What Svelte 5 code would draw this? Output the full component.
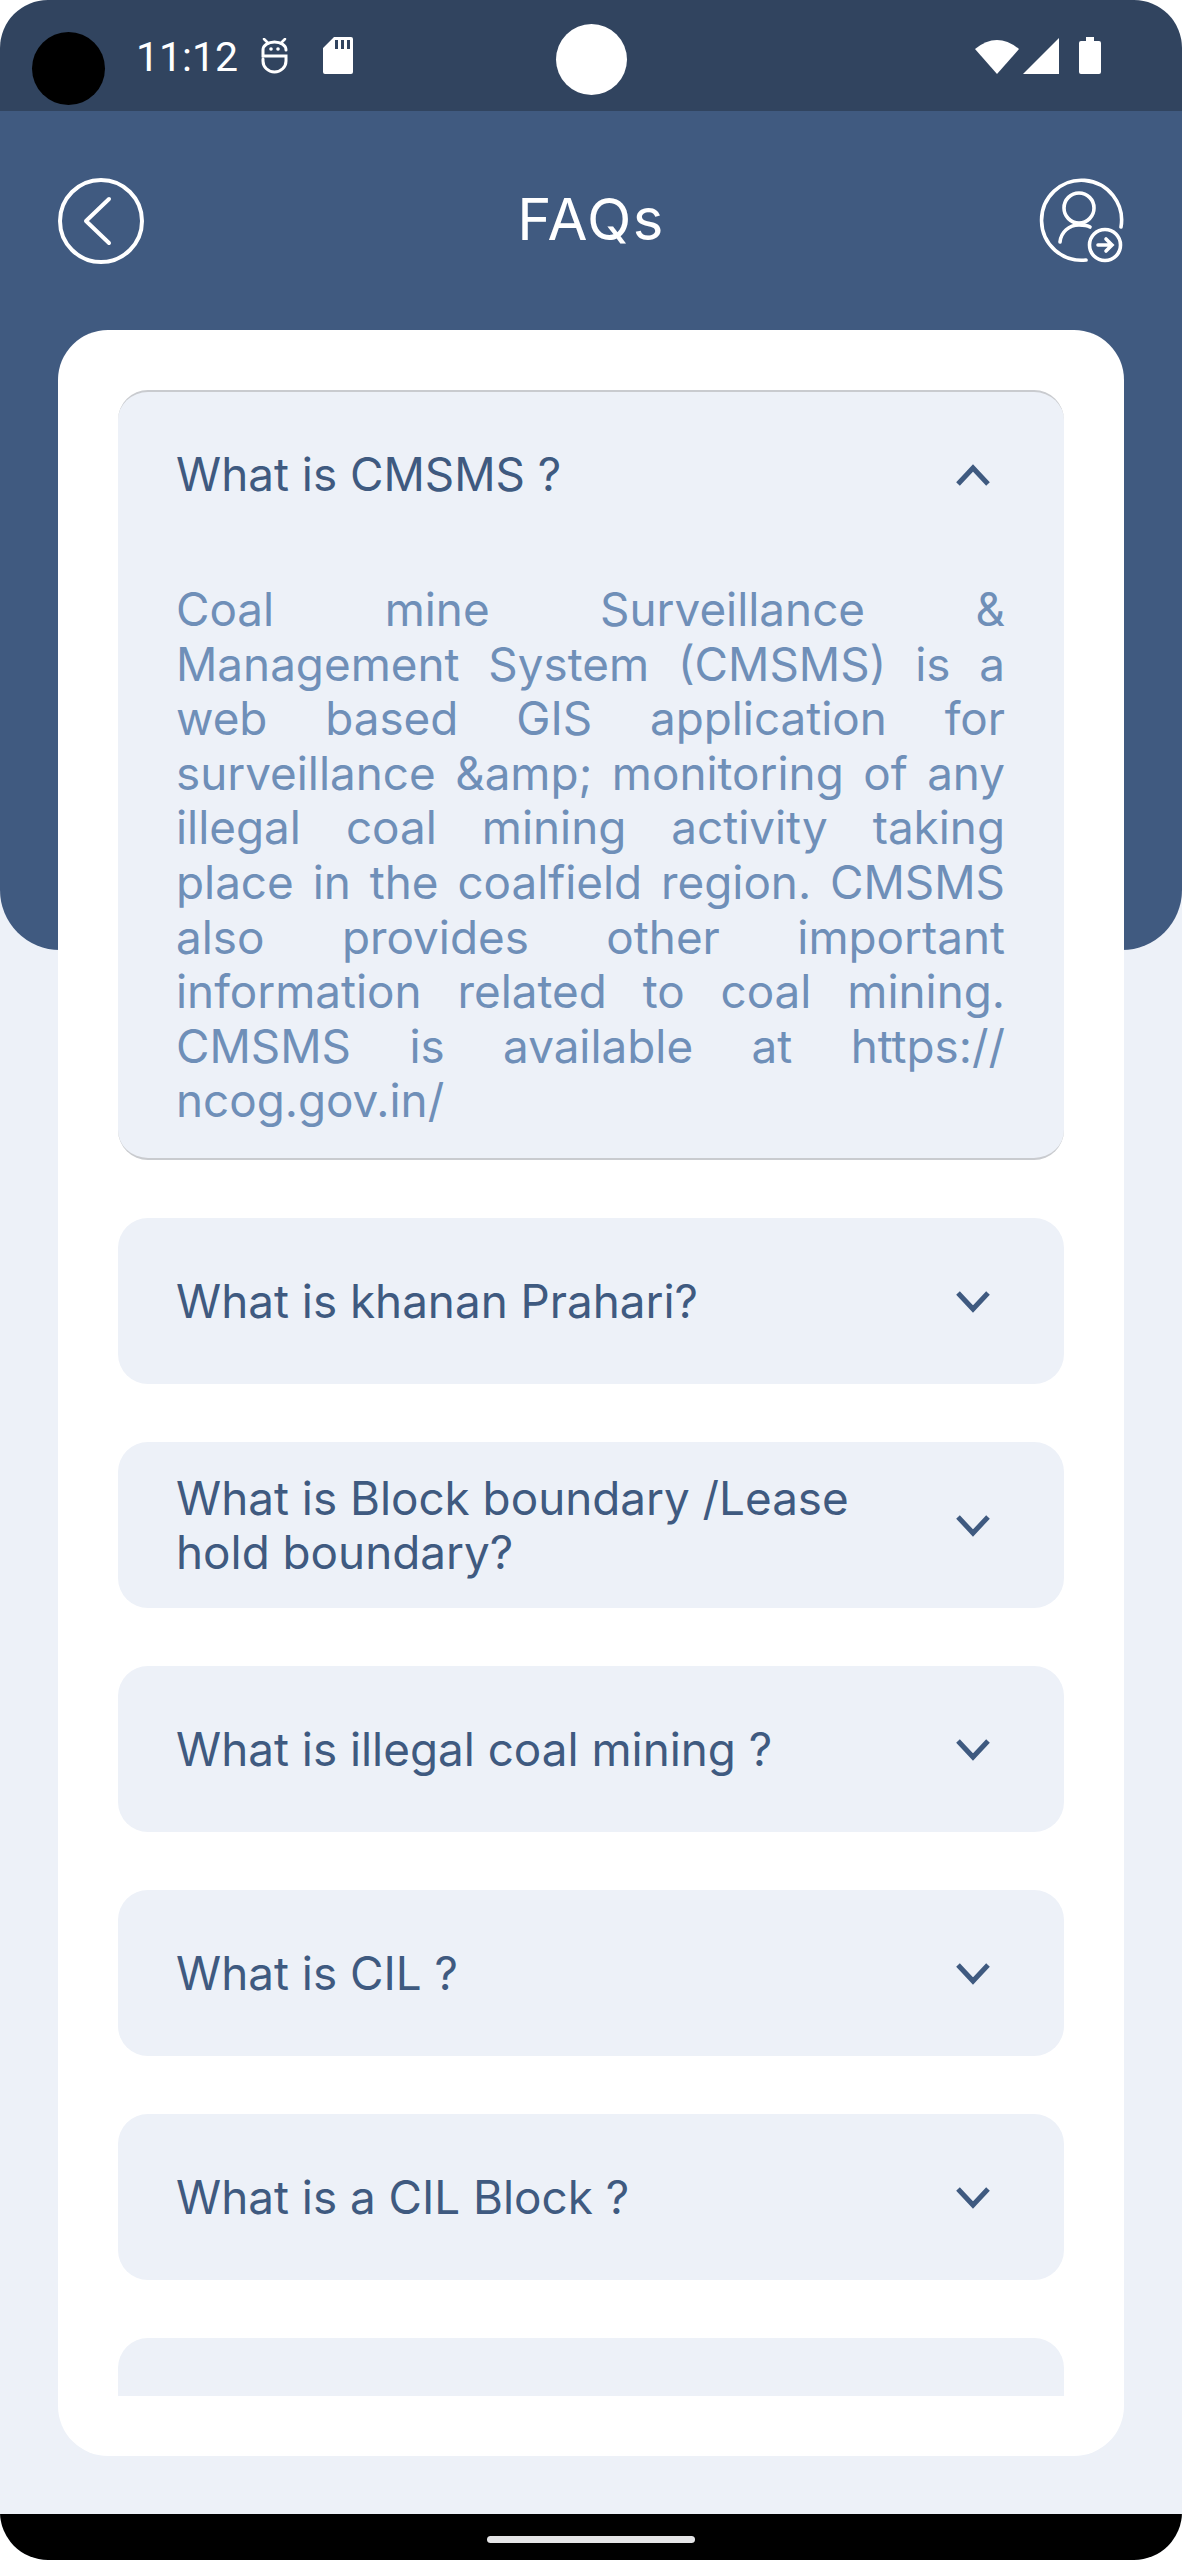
<script>
  const faqs = [
    'What is khanan Prahari?',
    'What is Block boundary /Lease hold boundary?',
    'What is illegal coal mining ?',
    'What is CIL ?',
    'What is a CIL Block ?',
    ''
  ];
</script>

<div class="screen">
  <div class="status">
    <span class="camera"></span>
    <span class="time">11:12</span>
    <svg class="debug" viewBox="0 0 27 36" fill="none" stroke="#fff" stroke-width="3" stroke-linecap="round">
      <path d="M25 12A11.5 8 0 0 0 2 12V18H25V23A11.5 11 0 0 1 2 23V21" />
      <path d="M3 1L7 5M24 1L20 5" stroke-width="2.5" />
      <circle cx="10" cy="11" r="1.8" fill="#fff" stroke="none" />
      <circle cx="17" cy="11" r="1.8" fill="#fff" stroke="none" />
    </svg>
    <svg class="sd" viewBox="0 0 30 37">
      <path fill="#fff" fill-rule="evenodd" d="M11 0h17a2 2 0 0 1 2 2v33a2 2 0 0 1-2 2H2a2 2 0 0 1-2-2V11zM12 3v9h3V3zM18 3v9h3V3zM24 3v9h3V3z" />
    </svg>
    <span class="dot"></span>
    <div class="sys">
      <svg class="wifi" viewBox="0 0 44 36"><path fill="#fff" d="M0 11Q22-7 44 11L22 36z" /></svg>
      <svg class="signal" viewBox="0 0 36 36"><path fill="#fff" d="M36 0v36H0z" /></svg>
      <svg class="battery" viewBox="0 0 22 37"><path fill="#fff" d="M7 0h8v4h5a2 2 0 0 1 2 2v29a2 2 0 0 1-2 2H2a2 2 0 0 1-2-2V6a2 2 0 0 1 2-2h5z" /></svg>
    </div>
  </div>

  <header class="head">
    <svg class="back" viewBox="0 0 86 86" fill="none" stroke="#fff" stroke-width="4" stroke-linecap="round" stroke-linejoin="round">
      <circle cx="43" cy="43" r="41" />
      <path d="M51 21L28 43L51 65" />
    </svg>
    <h1>FAQs</h1>
    <svg class="user" viewBox="0 0 86 86" fill="none" stroke="#fff" stroke-width="3.6" stroke-linecap="round">
      <path d="M83 49A40 40 0 1 0 48 82" />
      <circle cx="41" cy="30" r="15" />
      <path d="M22 64C23 54 31 47 41 47C45 47 49 47 52 49" />
      <circle cx="67" cy="67" r="15.5" />
      <path d="M60 67H73M68 61L74 67L68 73" stroke-width="3.6" />
    </svg>
  </header>

  <main class="card">
    <div class="list">
      <section class="item open">
        <div class="q">
          <span>What is CMSMS ?</span>
          <svg class="chev" viewBox="0 0 34 22" fill="none" stroke="#3f5a80" stroke-width="5"><path d="M2 20L17 4L32 20" /></svg>
        </div>
        <p class="a">Coal mine Surveillance &amp; Management System (CMSMS) is a web based GIS application for surveillance &amp;amp; monitoring of any illegal coal mining activity taking place in the coalfield region. CMSMS also provides other important information related to coal mining. CMSMS is available at https://<wbr />ncog.gov.in/</p>
      </section>
      {#each faqs as text}
        <section class="item">
          <div class="q">
            <span>{text}</span>
            <svg class="chev" viewBox="0 0 34 22" fill="none" stroke="#3f5a80" stroke-width="5"><path d="M2 2L17 18L32 2" /></svg>
          </div>
        </section>
      {/each}
    </div>
  </main>

  <div class="nav"><span class="pill"></span></div>
</div>

<style>
  :global(body) {
    margin: 0;
    background: #fff;
  }

  .screen {
    position: relative;
    width: 1182px;
    height: 2560px;
    display: flex;
    flex-direction: column;
    overflow: hidden;
    border-radius: 48px;
    background: #edf1f8;
    font-family: Inter, "Noto Sans", sans-serif;
  }

  .status {
    height: 111px;
    flex: none;
    display: flex;
    align-items: center;
    background: #31445f;
    color: #fff;
    padding: 0 81px 0 32px;
    box-sizing: border-box;
  }
  .camera { width: 73px; height: 73px; margin-top: 25px; border-radius: 50%; background: #000; }
  .time { margin-left: 31px; margin-top: 3px; font: 41px/1 Roboto, sans-serif; }
  .debug { width: 27px; height: 36px; margin-left: 23px; }
  .sd { width: 30px; height: 37px; margin-left: 35px; }
  .dot { position: absolute; left: 556px; top: 24px; width: 71px; height: 71px; border-radius: 50%; background: #fff; }
  .sys { margin-left: auto; display: flex; gap: 4px; align-items: center; }
  .wifi { width: 44px; height: 36px; }
  .signal { width: 36px; height: 36px; }
  .battery { width: 22px; height: 37px; margin-left: 16px; }

  .head {
    height: 839px;
    flex: none;
    box-sizing: border-box;
    background: #405a80;
    border-radius: 0 0 60px 60px;
    display: flex;
    justify-content: space-between;
    align-items: flex-start;
    padding: 67px 58px 0;
  }
  .back, .user { width: 86px; height: 86px; }
  h1 {
    margin: 0;
    color: #fff;
    font-size: 58px;
    font-weight: 400;
    line-height: 82px;
    letter-spacing: 1.4px;
  }

  .card {
    margin: -620px 58px 0;
    height: 2126px;
    flex: none;
    box-sizing: border-box;
    padding: 60px;
    background: #fff;
    border-radius: 50px;
    position: relative;
  }
  .list {
    height: 100%;
    overflow: hidden;
    display: flex;
    flex-direction: column;
    gap: 58px;
  }

  .item {
    flex: none;
    background: #edf1f8;
    border-radius: 30px;
    color: #3f5a80;
    font-size: 45.8px;
  }
  .item.open {
    border-top: 2px solid #c9cbcf;
    border-bottom: 2px solid #c9cbcf;
  }
  .q {
    height: 166px;
    box-sizing: border-box;
    display: flex;
    align-items: center;
    justify-content: space-between;
    padding: 2px 74px 0 58px;
    line-height: 54px;
  }
  .q span { max-width: 700px; }
  .open .q { height: 164px; }
  .chev { width: 34px; height: 22px; flex: none; }
  .a {
    margin: 27px 0 0;
    padding: 0 59px 29px 58px;
    color: #6f8fb8;
    line-height: 54.6px;
    text-align: justify;
  }

  .nav {
    position: absolute;
    left: 0;
    right: 0;
    bottom: 0;
    height: 46px;
    background: #000;
    display: flex;
    justify-content: center;
    align-items: flex-start;
  }
  .pill { width: 208px; height: 7px; margin-top: 22px; border-radius: 4px; background: #e4e4e6; }
</style>
